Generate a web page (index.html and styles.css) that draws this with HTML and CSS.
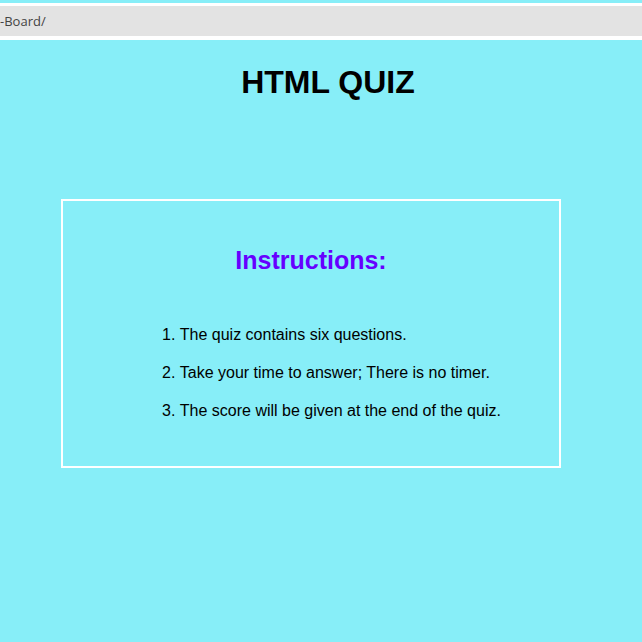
FILE: index.html
```html
<!DOCTYPE html>
<html>
<head>
<meta charset="utf-8">
<link rel="stylesheet" href="styles.css">
</head>
<body>
  <div class="urlbar"><div class="urlbar-inner">-Board/</div></div>
  <h1 class="title">HTML QUIZ</h1>
  <section class="box">
    <h2 class="box-title">Instructions:</h2>
    <ol class="rules">
      <li>The quiz contains six questions.</li>
      <li>Take your time to answer; There is no timer.</li>
      <li>The score will be given at the end of the quiz.</li>
    </ol>
  </section>
</body>
</html>
```
FILE: styles.css
```css
html, body {
  margin: 0;
  padding: 0;
  background: #87eef8;
  font-family: "Liberation Sans", Arial, sans-serif;
}
.urlbar {
  margin-top: 3px;
  background: #ffffff;
  padding: 3px 0 4px;
}
.urlbar-inner {
  background: #e3e3e3;
  height: 30px;
  line-height: 30px;
  font-family: "Open Sans", "DejaVu Sans", sans-serif;
  font-size: 13px;
  color: #444444;
  white-space: nowrap;
  overflow: hidden;
}
.title {
  margin: 24px 0 0;
  padding-left: 14px;
  text-align: center;
  font-size: 32px;
  font-weight: bold;
  color: #000;
}
.box {
  margin: 98px 0 0 61px;
  width: 496px;
  border: 2px solid #ffffff;
  padding: 45px 0 46px;
}
.box-title {
  margin: 0;
  text-align: center;
  font-size: 25px;
  font-weight: bold;
  color: #6600ff;
}
.rules {
  margin: 51px 0 0;
  padding: 0 0 0 99px;
  list-style-position: inside;
  display: flex;
  flex-direction: column;
  gap: 20px;
  font-size: 16px;
  color: #000;
}
.rules li {
  line-height: 18px;
}
```
